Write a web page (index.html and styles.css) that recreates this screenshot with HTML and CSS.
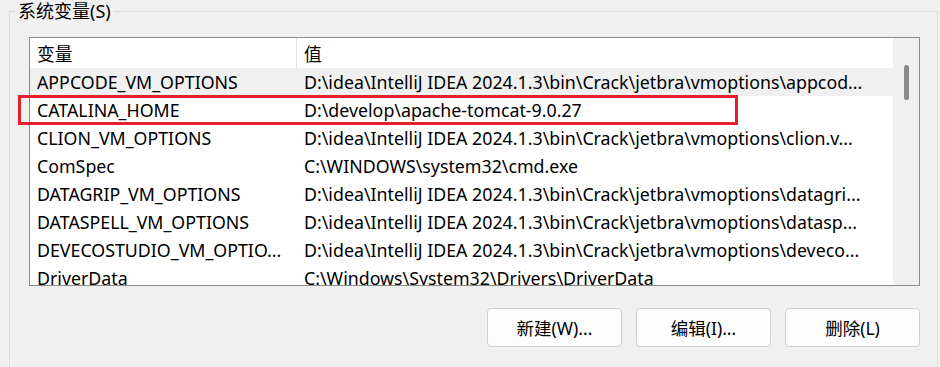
FILE: index.html
```html
<!doctype html>
<html lang="zh-CN">
  <head>
    <meta charset="UTF-8" />
    <title>系统变量</title>
    <link rel="stylesheet" href="styles.css">
  </head>
  <body>
    <fieldset class="group">
      <legend>系统变量(S)</legend>
      <div class="listview">
        <div class="table">
          <div class="row head">
            <div class="cell name">变量</div>
            <div class="cell value">值</div>
          </div>
          <div class="row hover">
            <div class="cell name">APPCODE_VM_OPTIONS</div>
            <div class="cell value">D:\idea\IntelliJ IDEA 2024.1.3\bin\Crack\jetbra\vmoptions\appcod...</div>
          </div>
          <div class="row">
            <div class="cell name">CATALINA_HOME</div>
            <div class="cell value">D:\develop\apache-tomcat-9.0.27</div>
          </div>
          <div class="row">
            <div class="cell name">CLION_VM_OPTIONS</div>
            <div class="cell value">D:\idea\IntelliJ IDEA 2024.1.3\bin\Crack\jetbra\vmoptions\clion.v...</div>
          </div>
          <div class="row">
            <div class="cell name">ComSpec</div>
            <div class="cell value">C:\WINDOWS\system32\cmd.exe</div>
          </div>
          <div class="row">
            <div class="cell name">DATAGRIP_VM_OPTIONS</div>
            <div class="cell value">D:\idea\IntelliJ IDEA 2024.1.3\bin\Crack\jetbra\vmoptions\datagri...</div>
          </div>
          <div class="row">
            <div class="cell name">DATASPELL_VM_OPTIONS</div>
            <div class="cell value">D:\idea\IntelliJ IDEA 2024.1.3\bin\Crack\jetbra\vmoptions\datasp...</div>
          </div>
          <div class="row">
            <div class="cell name">DEVECOSTUDIO_VM_OPTIO...</div>
            <div class="cell value">D:\idea\IntelliJ IDEA 2024.1.3\bin\Crack\jetbra\vmoptions\deveco...</div>
          </div>
          <div class="row">
            <div class="cell name">DriverData</div>
            <div class="cell value">C:\Windows\System32\Drivers\DriverData</div>
          </div>
        </div>
        <div class="scrollbar"><div class="thumb"></div></div>
        <div class="mark"></div>
      </div>
      <div class="actions">
        <button class="btn">新建(W)...</button>
        <button class="btn">编辑(I)...</button>
        <button class="btn">删除(L)</button>
      </div>
    </fieldset>
  </body>
</html>
```

FILE: styles.css
```css
body {
  margin: 0;
  background-color: #f0f0f0;
  font-family: "Noto Sans", "Noto Sans CJK SC", sans-serif;
  font-size: 17.8px;
  color: #000;
  overflow: hidden;
}
.group {
  box-sizing: border-box;
  min-width: 0;
  height: 367px;
  margin: 0 2px 0 9px;
  padding: 0 17px 0 5px;
  border: 1px solid #dcdcdc;
  border-bottom: none;
}
.group legend {
  padding: 0 3px;
  font-size: 18px;
  line-height: 22px;
}
.listview {
  position: relative;
  display: flex;
  margin: 15px 0 0 14px;
  height: 247px;
  background: white;
  border: 1px solid #8c8c8c;
}
.table {
  flex: 1;
  min-width: 0;
  overflow: hidden;
}
.row {
  display: flex;
  height: 28px;
  align-items: center;
}
.row.head {
  height: 30px;
}
.row.hover {
  background-color: #f0f0f0;
}
.cell {
  white-space: nowrap;
  overflow: hidden;
  text-overflow: ellipsis;
}
.cell.name {
  width: 259px;
  padding-left: 7px;
  flex-shrink: 0;
}
.cell.value {
  flex: 1;
  min-width: 0;
  padding: 0 4px 0 8px;
}
.head .cell {
  align-self: stretch;
  display: flex;
  align-items: center;
}
.head .cell.value {
  border-left: 1px solid #e5e5e5;
  padding-left: 7px;
}
.scrollbar {
  width: 26px;
  background-color: #f0f0f0;
}
.thumb {
  width: 5px;
  height: 35px;
  margin: 27px 0 0 11px;
  border-radius: 3px;
  background-color: #8a8a8a;
}
.mark {
  position: absolute;
  left: -12px;
  top: 57px;
  width: 714px;
  height: 24px;
  border: 3px solid #e3202b;
}
.actions {
  display: flex;
  justify-content: flex-end;
  gap: 14px;
  margin-top: 22px;
}
.btn {
  width: 135px;
  height: 39px;
  font-family: inherit;
  font-size: 17.5px;
  color: #000;
  background-color: #fdfdfd;
  border: 1px solid #d0d0d0;
  border-radius: 4px;
}
```
